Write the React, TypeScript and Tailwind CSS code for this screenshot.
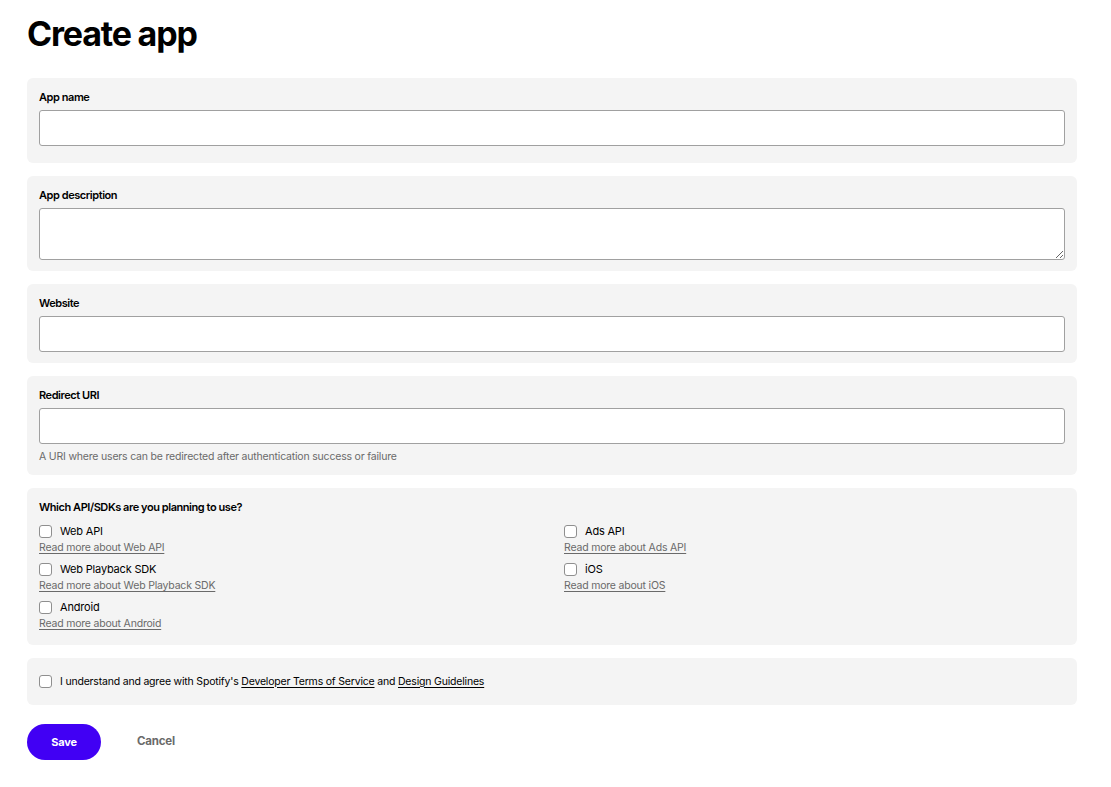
const apis = [
  { name: "Web API", link: "Read more about Web API" },
  { name: "Ads API", link: "Read more about Ads API" },
  { name: "Web Playback SDK", link: "Read more about Web Playback SDK" },
  { name: "iOS", link: "Read more about iOS" },
  { name: "Android", link: "Read more about Android" },
];

function Checkbox() {
  return (
    <input
      type="checkbox"
      className="h-[13px] w-[13px] shrink-0 appearance-none rounded-[3px] border border-[#8f8f8f] bg-white"
    />
  );
}

function Label({ children }: { children: React.ReactNode }) {
  return (
    <label className="block text-[11px] font-semibold leading-[14px] tracking-[-0.04em] text-black">
      {children}
    </label>
  );
}

export default function App() {
  return (
    <div
      className="min-h-screen bg-white px-[27px] pt-[14px] text-black"
      style={{ fontFamily: "Inter, 'Noto Sans', sans-serif" }}
    >
      <h1 className="text-[34px] font-bold leading-[40px] tracking-[-0.035em]">
        Create app
      </h1>

      <form className="mt-[24px] flex w-[1050px] flex-col gap-[13px] tracking-[-0.012em]">
        <div className="rounded-md bg-[#f4f4f4] px-3 pb-[17px] pt-3">
          <Label>App name</Label>
          <input
            type="text"
            className="mt-[6px] block h-9 w-full rounded-[3px] border border-[#a0a0a0] bg-white"
          />
        </div>

        <div className="rounded-md bg-[#f4f4f4] px-3 pb-[11px] pt-3">
          <Label>App description</Label>
          <textarea className="mt-[6px] block h-[52px] w-full resize-y rounded-[3px] border border-[#a0a0a0] bg-white" />
        </div>

        <div className="rounded-md bg-[#f4f4f4] px-3 pb-[11px] pt-3">
          <Label>Website</Label>
          <input
            type="text"
            className="mt-[6px] block h-9 w-full rounded-[3px] border border-[#a0a0a0] bg-white"
          />
        </div>

        <div className="rounded-md bg-[#f4f4f4] px-3 pb-[11px] pt-3">
          <Label>Redirect URI</Label>
          <input
            type="text"
            className="mt-[6px] block h-9 w-full rounded-[3px] border border-[#a0a0a0] bg-white"
          />
          <p className="mt-[6px] text-[10.5px] leading-[14px] text-[#6a6a6a]">
            A URI where users can be redirected after authentication success or failure
          </p>
        </div>

        <div className="rounded-md bg-[#f4f4f4] px-3 pb-[10px] pt-3">
          <Label>Which API/SDKs are you planning to use?</Label>
          <div className="mt-[7px] grid grid-cols-2 gap-x-6">
            {apis.map((api) => (
              <div key={api.name} className="mb-1 flex flex-col">
                <div className="flex h-5 items-center gap-[8px]">
                  <Checkbox />
                  <span className="text-[11px] text-black">{api.name}</span>
                </div>
                <a
                  href="#"
                  className="self-start text-[10.5px] leading-[14px] text-[#6a6a6a] underline underline-offset-2"
                >
                  {api.link}
                </a>
              </div>
            ))}
          </div>
        </div>

        <div className="flex h-[47px] items-center gap-[8px] rounded-md bg-[#f4f4f4] px-3">
          <Checkbox />
          <span className="text-[10.5px] text-black">
            I understand and agree with Spotify's{" "}
            <a href="#" className="underline underline-offset-2">
              Developer Terms of Service
            </a>{" "}
            and{" "}
            <a href="#" className="underline underline-offset-2">
              Design Guidelines
            </a>
          </span>
        </div>

        <div className="mt-[6px] flex items-center">
          <button
            type="button"
            className="h-9 w-[74px] rounded-full bg-[#4100f4] text-[11px] font-bold text-white"
          >
            Save
          </button>
          <button
            type="button"
            className="ml-[36px] text-[11.5px] font-bold text-[#6a6a6a]"
          >
            Cancel
          </button>
        </div>
      </form>
    </div>
  );
}
